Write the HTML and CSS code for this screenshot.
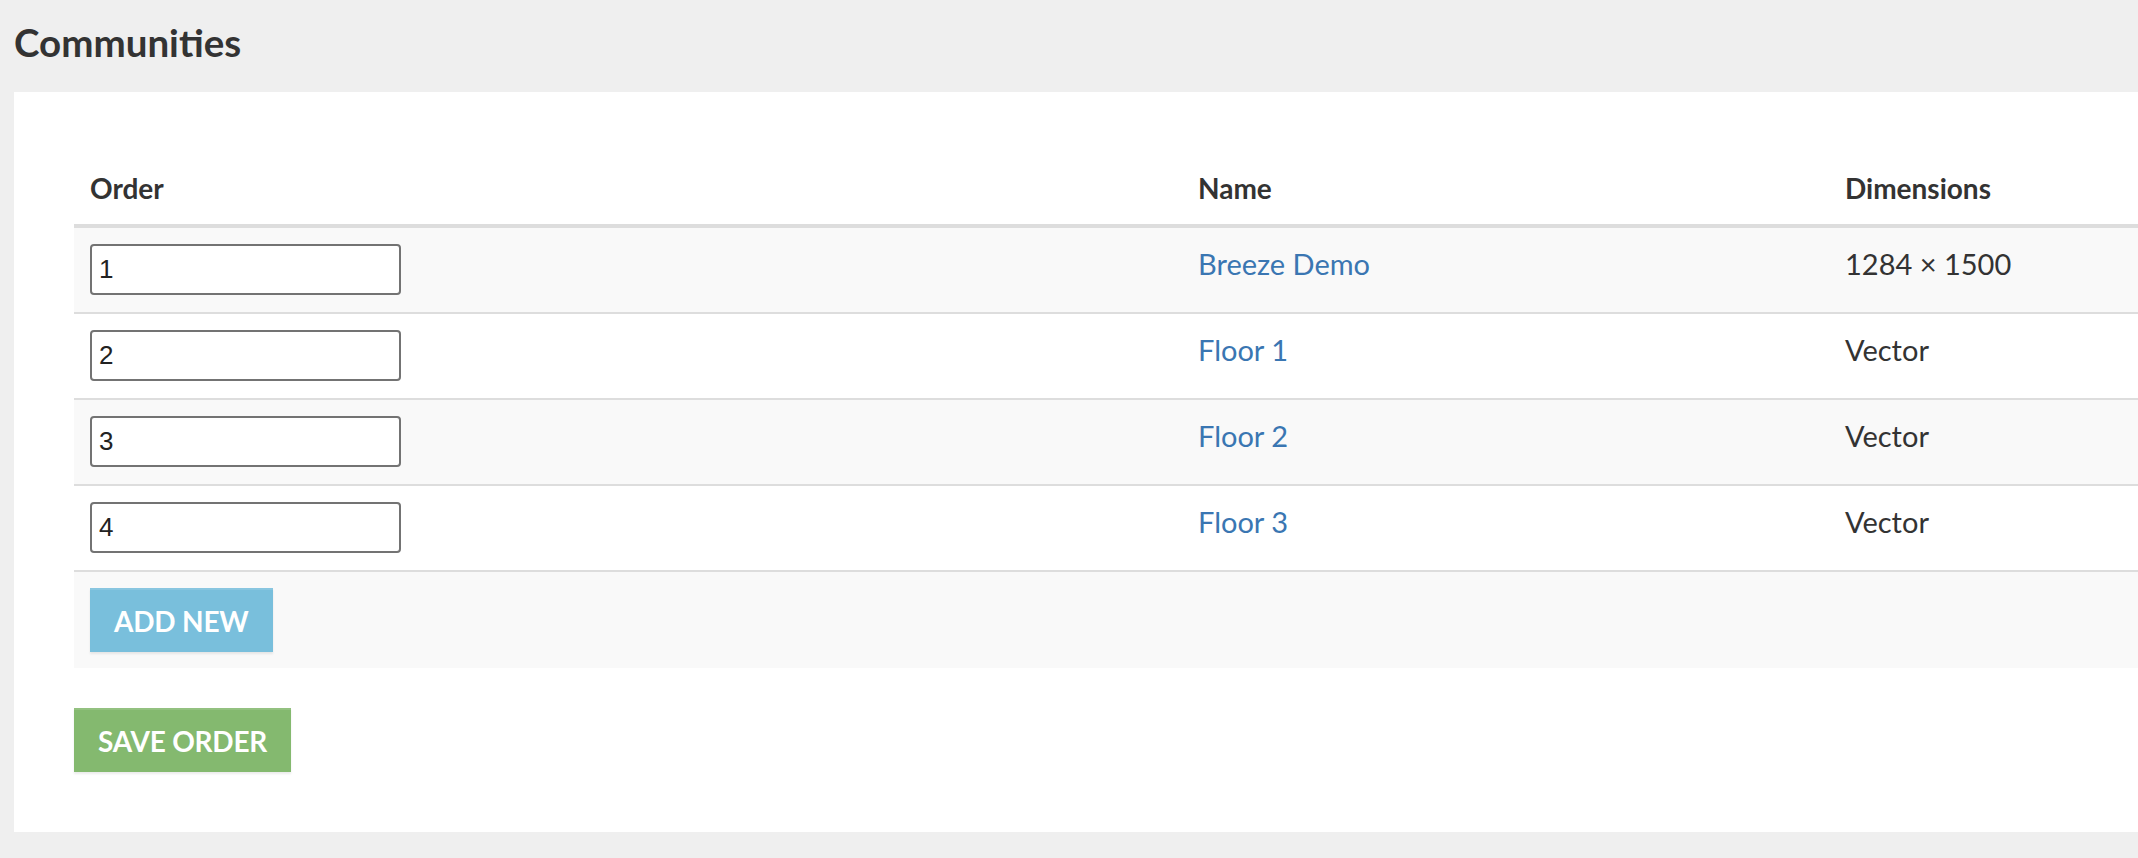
FILE: index.html
```html
<!DOCTYPE html>
<html>
<head>
<meta charset="utf-8">
<title>Communities</title>
<link rel="stylesheet" href="styles.css">
</head>
<body>
<div class="page">
  <h1 class="title">Communities</h1>
  <div class="panel">
    <table class="grid">
      <thead>
        <tr>
          <th class="col-order">Order</th>
          <th class="col-name">Name</th>
          <th class="col-dim">Dimensions</th>
        </tr>
      </thead>
      <tbody>
        <tr class="odd">
          <td><input class="order-input" type="text" value="1"></td>
          <td><a class="link" href="#">Breeze Demo</a></td>
          <td>1284 × 1500</td>
        </tr>
        <tr>
          <td><input class="order-input" type="text" value="2"></td>
          <td><a class="link" href="#">Floor 1</a></td>
          <td>Vector</td>
        </tr>
        <tr class="odd">
          <td><input class="order-input" type="text" value="3"></td>
          <td><a class="link" href="#">Floor 2</a></td>
          <td>Vector</td>
        </tr>
        <tr>
          <td><input class="order-input" type="text" value="4"></td>
          <td><a class="link" href="#">Floor 3</a></td>
          <td>Vector</td>
        </tr>
        <tr class="odd footer-row">
          <td colspan="3"><button class="btn btn-info">Add New</button></td>
        </tr>
      </tbody>
    </table>
    <div class="actions">
      <button class="btn btn-success">Save Order</button>
    </div>
  </div>
</div>
</body>
</html>
```

FILE: styles.css
```css
html, body {
  margin: 0;
  padding: 0;
  overflow: hidden;
  background: #efefef;
}

body {
  font-family: Lato, "Noto Sans", sans-serif;
  color: #333333;
}

.page {
  padding: 21px 0 26px 14px;
}

.title {
  margin: 0 0 28px 0;
  font-size: 38.5px;
  line-height: 43px;
  font-weight: 700;
  color: #333333;
}

.panel {
  background: #ffffff;
  padding: 60px 0 60px 60px;
}

.grid {
  width: 100%;
  border-collapse: collapse;
  border-spacing: 0;
  table-layout: fixed;
}

.grid th {
  text-align: left;
  font-size: 28px;
  line-height: 38px;
  font-weight: 700;
  padding: 17px 16px;
  border-bottom: 4px solid #dddddd;
  vertical-align: middle;
}

.col-order { width: 1076px; }
.col-name { width: 615px; }

.grid td {
  font-size: 29px;
  line-height: 43px;
  padding: 14px 16px 0 16px;
  height: 70px;
  vertical-align: top;
  border-bottom: 2px solid #dddddd;
}

.grid tr.odd td {
  background: #f9f9f9;
}

.grid tr.footer-row td {
  border-bottom: none;
  padding: 16px 16px;
  height: 64px;
}

.order-input {
  display: block;
  box-sizing: border-box;
  width: 311px;
  height: 51px;
  margin-top: 2px;
  padding: 0 7px;
  border: 2px solid #737373;
  border-radius: 4px;
  background: #ffffff;
  font-family: "Liberation Sans", Arial, sans-serif;
  font-size: 26px;
  color: #222222;
}

.link {
  color: #3a76b2;
  text-decoration: none;
}

.btn {
  display: inline-block;
  box-sizing: border-box;
  height: 64px;
  padding: 0 24px;
  border: none;
  border-top: 2px solid rgba(255, 255, 255, 0.12);
  border-radius: 0;
  font-family: Lato, "Noto Sans", sans-serif;
  font-size: 28px;
  letter-spacing: -0.2px;
  font-weight: 700;
  text-transform: uppercase;
  color: #ffffff;
  box-shadow: 0 2px 2px rgba(0, 0, 0, 0.08);
  cursor: pointer;
}

.btn-info {
  background: #79bfdc;
}

.btn-success {
  background: #84b96f;
}

.actions {
  margin-top: 40px;
}
```
